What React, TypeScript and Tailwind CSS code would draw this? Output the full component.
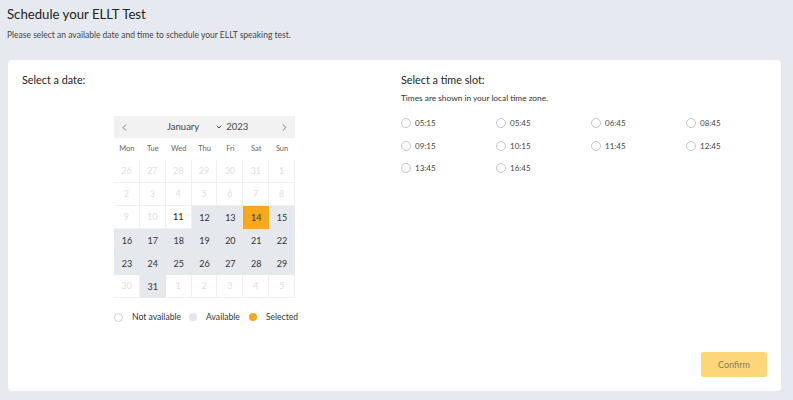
import { ChevronLeft, ChevronRight, ChevronDown } from "lucide-react";

type Day = { n: number; kind: "off" | "open" | "today" | "selected" };

const weekdays = ["Mon", "Tue", "Wed", "Thu", "Fri", "Sat", "Sun"];

const off = (n: number): Day => ({ n, kind: "off" });
const open = (n: number): Day => ({ n, kind: "open" });

const weeks: Day[][] = [
  [26, 27, 28, 29, 30, 31, 1].map(off),
  [2, 3, 4, 5, 6, 7, 8].map(off),
  [off(9), off(10), { n: 11, kind: "today" }, open(12), open(13), { n: 14, kind: "selected" }, open(15)],
  [16, 17, 18, 19, 20, 21, 22].map(open),
  [23, 24, 25, 26, 27, 28, 29].map(open),
  [off(30), open(31), off(1), off(2), off(3), off(4), off(5)],
];

const slots = ["05:15", "05:45", "06:45", "08:45", "09:15", "10:15", "11:45", "12:45", "13:45", "16:45"];

function DayCell({ day }: { day: Day }) {
  const base = "h-[23px] flex items-center justify-center text-[9px]";
  if (day.kind === "selected")
    return <div className={`${base} bg-[#f7a81b] text-[#333]`}>{day.n}</div>;
  if (day.kind === "open")
    return <div className={`${base} bg-[#e5e8ed] text-[#333]`}>{day.n}</div>;
  if (day.kind === "today")
    return <div className={`${base} bg-white text-[#222] border-r border-b border-[#eef0f3]`}>{day.n}</div>;
  return <div className={`${base} bg-white text-[#e0e0e0] border-r border-b border-[#eef0f3]`}>{day.n}</div>;
}

export default function App() {
  return (
    <div
      className="w-[793px] h-[400px] bg-[#e6eaf0] overflow-hidden"
      style={{ fontFamily: "Lato, 'Liberation Sans', sans-serif" }}
    >
      <div className="px-[7px] pt-[5px] h-[60px]">
        <h1 className="text-[13.2px] leading-[18px] text-[#222]">Schedule your ELLT Test</h1>
        <p className="mt-[7px] text-[8.5px] leading-[10px] text-[#444]">
          Please select an available date and time to schedule your ELLT speaking test.
        </p>
      </div>

      <div className="ml-[8px] w-[773px] h-[331px] bg-white rounded-[4px] p-[14px] flex flex-col">
        <div className="flex">
          {/* Date */}
          <div className="w-[379px] shrink-0">
            <div className="text-[10.8px] leading-[12px] text-[#222]">Select a date:</div>
            <div className="ml-[92px] mt-[30px] w-[181px]">
              <div className="h-[22px] bg-[#f2f2f2] flex items-center px-[5px] text-[#444]">
                <ChevronLeft className="w-[11px] h-[11px]" strokeWidth={1.5} />
                <span className="ml-[37px] text-[9.5px]">January</span>
                <ChevronDown className="ml-[16px] w-[8px] h-[8px]" strokeWidth={3} />
                <span className="ml-[3px] text-[9.5px]">2023</span>
                <ChevronRight className="ml-auto w-[11px] h-[11px]" strokeWidth={1.5} />
              </div>
              <div className="grid grid-cols-7 h-[22px] items-center">
                {weekdays.map((w) => (
                  <div key={w} className="text-center text-[7.5px] text-[#666]">
                    {w}
                  </div>
                ))}
              </div>
              <div className="grid grid-cols-7">
                {weeks.flat().map((d, i) => (
                  <DayCell key={i} day={d} />
                ))}
              </div>
              <div className="mt-[13px] flex items-center text-[8.6px] text-[#333] whitespace-nowrap">
                <span className="shrink-0 w-[9px] h-[9px] rounded-full border border-[#d0d0d0]" />
                <span className="ml-[9px]">Not available</span>
                <span className="shrink-0 ml-[8px] w-[8px] h-[8px] rounded-full bg-[#e3e6eb]" />
                <span className="ml-[9px]">Available</span>
                <span className="shrink-0 ml-[9px] w-[8px] h-[8px] rounded-full bg-[#f7a81b]" />
                <span className="ml-[9px]">Selected</span>
              </div>
            </div>
          </div>

          {/* Time */}
          <div className="flex-1 min-w-0">
            <div className="text-[10.8px] leading-[12px] text-[#222]">Select a time slot:</div>
            <div className="mt-[7px] text-[8.3px] leading-[10px] text-[#333]">
              Times are shown in your local time zone.
            </div>
            <div className="mt-[14px] grid grid-cols-[repeat(4,95px)] gap-y-[10.5px]">
              {slots.map((s) => (
                <label key={s} className="flex items-center h-[12px]">
                  <span className="shrink-0 w-[10px] h-[10px] rounded-full border border-[#c4c4c4]" />
                  <span className="ml-[4px] text-[8px] text-[#444]">{s}</span>
                </label>
              ))}
            </div>
          </div>
        </div>

        <div className="mt-auto flex justify-end">
          <button className="w-[66px] h-[25px] rounded-[3px] bg-[#fdd67a] text-[9px] text-[#8a7a5a]">
            Confirm
          </button>
        </div>
      </div>
    </div>
  );
}
